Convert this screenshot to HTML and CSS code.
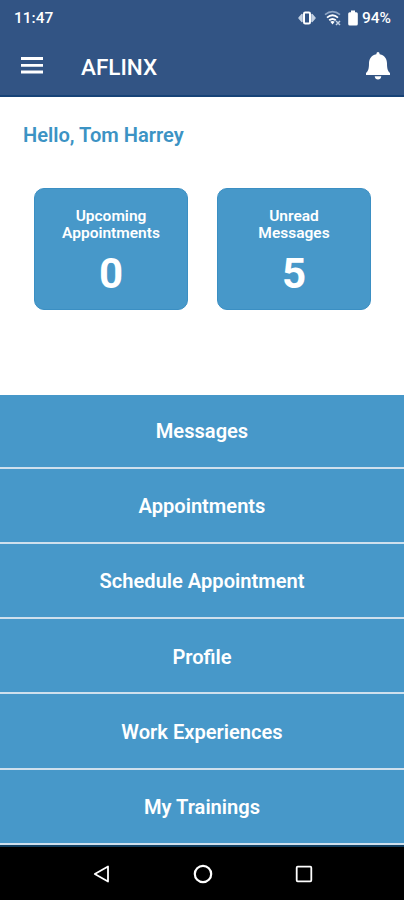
FILE: index.html
```html
<!DOCTYPE html>
<html lang="en">
<head>
  <meta charset="utf-8">
  <meta name="viewport" content="width=device-width, initial-scale=1">
  <title>AFLINX</title>
  <link rel="stylesheet" href="styles.css">
</head>
<body>
  <header class="header">
    <div class="status-bar">
      <span class="time">11:47</span>
      <div class="status-icons">
        <svg class="vibrate" width="18" height="14" viewBox="0 0 18 14">
          <path d="M1 7l3-3.500v7zM17 7l-3-3.500v7z" fill="#c3d1e3" stroke="#c3d1e3" stroke-width="1.500" stroke-linejoin="round"/>
          <rect x="6" y="1.500" width="6" height="11" rx="1.200" fill="#325484" stroke="#fff" stroke-width="2"/>
        </svg>
        <svg class="wifi" width="18" height="16" viewBox="0 0 18 16">
          <path d="M1 4.600Q8.500-1.200 16 4.600" fill="none" stroke="#8fa6c5" stroke-width="1.700"/>
          <path d="M3 7.600Q8.500 3 14 7.600M5.200 10.300Q8.500 7.600 11.800 10.300" fill="none" stroke="#fff" stroke-width="1.800"/>
          <path d="M6.300 11.800Q8.500 10.300 10.700 11.800L8.500 14.500z" fill="#fff"/>
          <path d="M12 11l4 4M16 11l-4 4" stroke="#c3d1e3" stroke-width="1.500"/>
        </svg>
        <svg class="battery" width="10" height="16" viewBox="0 0 10 16">
          <path d="M3 0.500h4v1.700h1.300q1.500 0 1.500 1.500v10.300q0 1.500-1.500 1.500H1.700q-1.500 0-1.500-1.500V3.700q0-1.500 1.500-1.500H3z" fill="#fff"/>
        </svg>
        <span class="percent">94%</span>
      </div>
    </div>
    <div class="app-bar">
      <a class="menu-button" href="#" aria-label="Menu">
        <svg width="22" height="18" viewBox="0 0 22 18">
          <path d="M0 1.500h22M0 8.300h22M0 15h22" stroke="#fff" stroke-width="2.800"/>
        </svg>
      </a>
      <h1 class="title">AFLINX</h1>
      <a class="bell" href="#" aria-label="Notifications">
        <svg width="26" height="30" viewBox="0 0 26 30">
          <path d="M13 1q1.500 0 1.700 2.200C20 4.200 22 8.200 22 12.500c0 5 .8 7.500 3 9.500v2H1v-2c2.200-2 3-4.500 3-9.500 0-4.300 2-8.300 7.300-9.300Q11.500 1 13 1z" fill="#fff"/>
          <path d="M9.700 25.300h6.600q-.5 3.200-3.300 3.200t-3.300-3.200z" fill="#fff"/>
        </svg>
      </a>
    </div>
  </header>

  <main class="content">
    <p class="greeting">Hello, Tom Harrey</p>
    <div class="cards">
      <a class="card" href="#">
        <span class="card-label">Upcoming<br>Appointments</span>
        <span class="card-count">0</span>
      </a>
      <a class="card" href="#">
        <span class="card-label">Unread<br>Messages</span>
        <span class="card-count">5</span>
      </a>
    </div>
  </main>

  <nav class="menu">
    <a href="#">Messages</a>
    <a href="#">Appointments</a>
    <a href="#">Schedule Appointment</a>
    <a href="#">Profile</a>
    <a href="#">Work Experiences</a>
    <a href="#">My Trainings</a>
  </nav>

  <footer class="system-nav">
    <svg width="20" height="20" viewBox="0 0 20 20"><path d="M16 2.500v15L2.800 10z" fill="none" stroke="#fff" stroke-width="1.800" stroke-linejoin="round"/></svg>
    <svg width="20" height="20" viewBox="0 0 20 20"><circle cx="10" cy="10" r="8.200" fill="none" stroke="#fff" stroke-width="2.200"/></svg>
    <svg width="20" height="20" viewBox="0 0 20 20"><rect x="2.700" y="2.700" width="14.600" height="14.600" rx="1" fill="none" stroke="#fff" stroke-width="1.800"/></svg>
  </footer>
</body>
</html>
```

FILE: styles.css
```css
* { box-sizing: border-box; }

body {
  margin: 0;
  height: 900px;
  display: flex;
  flex-direction: column;
  overflow: hidden;
  background: #fff;
  font-family: Roboto, "Liberation Sans", sans-serif;
}

a { color: inherit; text-decoration: none; }
svg { display: block; }

/* header */
.header {
  height: 97px;
  background: #325484;
  border-bottom: 2px solid #174377;
  color: #fff;
}
.status-bar {
  height: 36px;
  padding: 0 13px 0 14px;
  display: flex;
  align-items: center;
  justify-content: space-between;
  font-size: 15.500px;
  font-weight: 500;
}
.status-icons { display: flex; align-items: center; }
.wifi { margin-left: 8px; }
.battery { margin-left: 6px; }
.percent { margin-left: 4px; }
.app-bar {
  height: 60px;
  padding: 0 13px 0 21px;
  display: flex;
  align-items: center;
}
.title {
  margin: 2px 0 0 38px;
  font-size: 22.500px;
  font-weight: 500;
}
.bell { margin-left: auto; }

/* greeting and counters */
.content { height: 298px; }
.greeting {
  margin: 25px 0 0 23px;
  line-height: 26px;
  font-size: 20.100px;
  font-weight: 600;
  color: #3c93c4;
}
.cards {
  display: flex;
  gap: 29px;
  padding: 40px 33px 0 34px;
}
.card {
  flex: 1;
  height: 122px;
  padding-top: 19px;
  border-radius: 10px;
  background: #4798c9;
  border: 1px solid #3b8fc3;
  color: #fff;
  text-align: center;
}
.card-label {
  display: block;
  font-size: 15.500px;
  line-height: 17px;
  font-weight: 600;
}
.card-count {
  display: block;
  margin-top: 8px;
  font-size: 42px;
  line-height: 48px;
  font-weight: 700;
}

/* main menu */
.menu { color: #fff; background: #4798c9; }
.menu a {
  height: 75.300px;
  padding-top: 2px;
  display: flex;
  align-items: center;
  justify-content: center;
  border-bottom: 2px solid #cfe0ed;
  font-size: 20.100px;
  font-weight: 600;
}
.menu a:first-child {
  height: 73.500px;
  padding-top: 0;
}

/* android navigation */
.system-nav {
  flex: 1;
  padding: 1px 0 0 1px;
  display: flex;
  justify-content: center;
  align-items: center;
  gap: 81px;
  border-top: 2px solid #123f60;
  background: #000;
}
```
